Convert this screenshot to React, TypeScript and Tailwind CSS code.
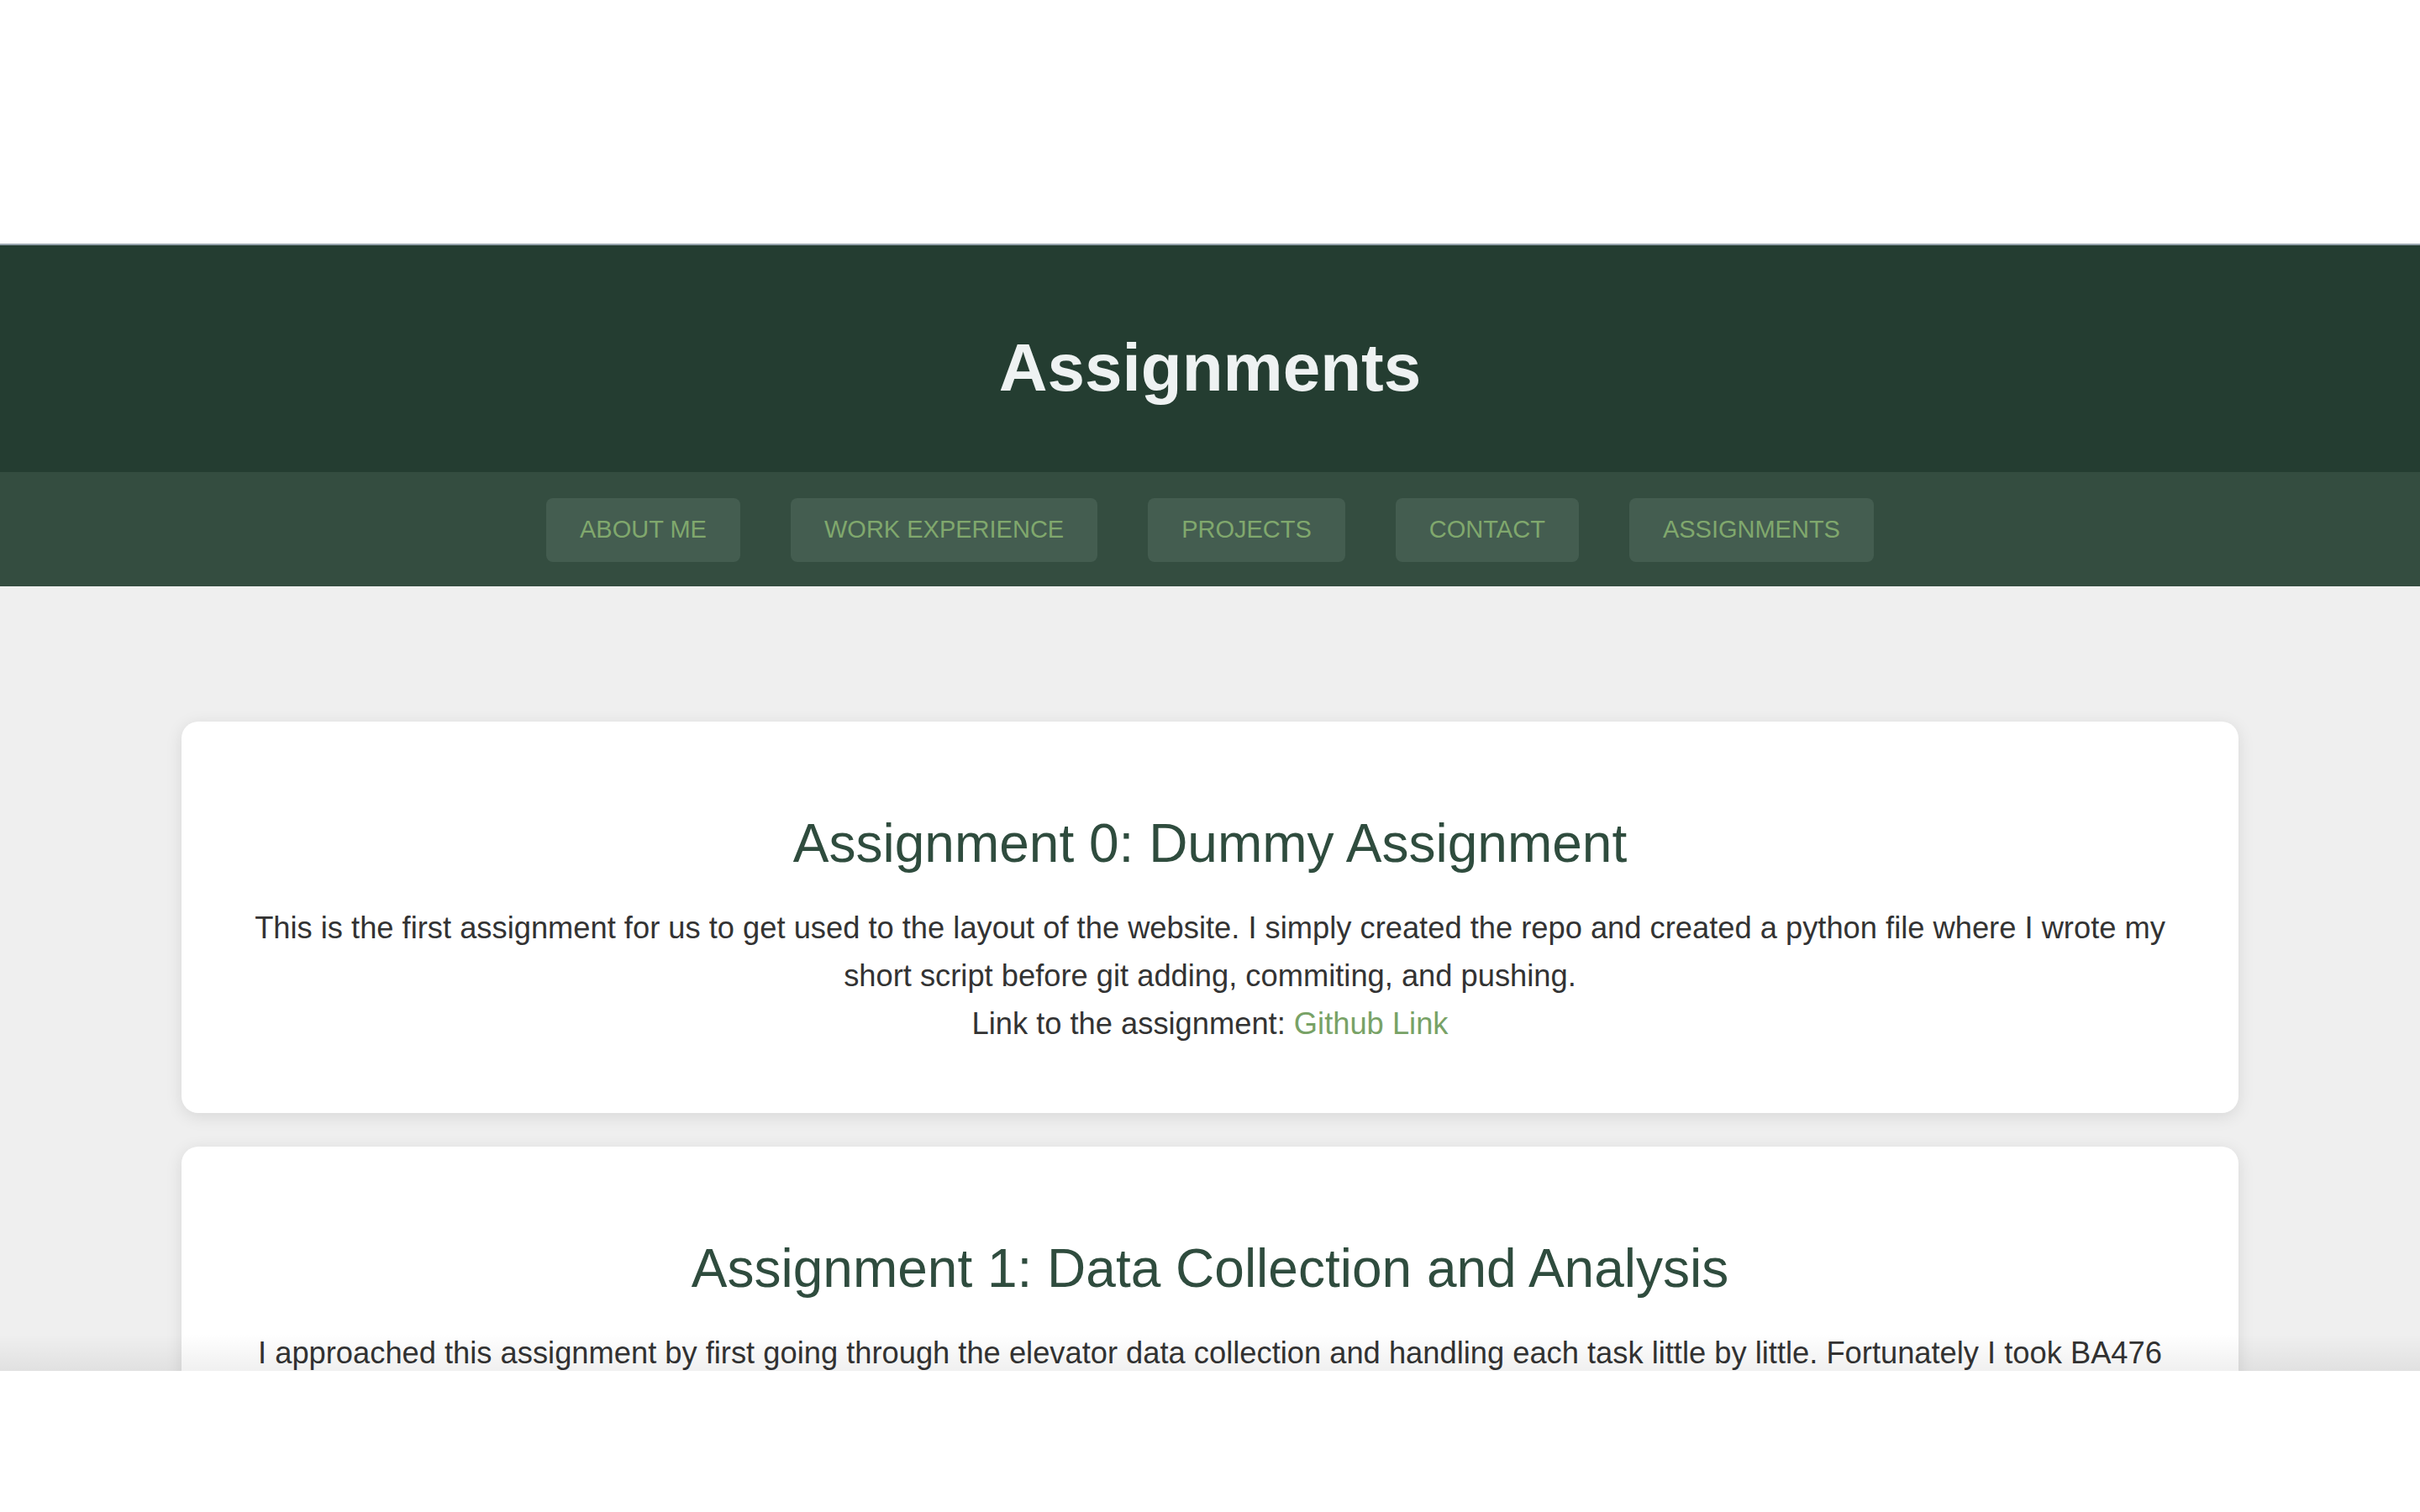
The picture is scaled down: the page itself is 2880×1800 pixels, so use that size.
const navItems = ['ABOUT ME', 'WORK EXPERIENCE', 'PROJECTS', 'CONTACT', 'ASSIGNMENTS'];

const assignments = [
  {
    title: 'Assignment 0: Dummy Assignment',
    body: 'This is the first assignment for us to get used to the layout of the website. I simply created the repo and created a python file where I wrote my short script before git adding, commiting, and pushing.',
  },
  {
    title: 'Assignment 1: Data Collection and Analysis',
    body: 'I approached this assignment by first going through the elevator data collection and handling each task little by little. Fortunately I took BA476 last semester, so most of the pandas work felt familiar and I could focus on cleaning the data and plotting the results.',
  },
];

function AssignmentCard({ title, body }: { title: string; body: string }) {
  return (
    <div className="bg-white rounded-[20px] shadow-[0_4px_20px_rgba(0,0,0,0.1)] px-[80px] pt-[108px] pb-[78px] text-center">
      <h2 className="text-[64px] leading-[74px] font-normal text-[#2f4c3e]">{title}</h2>
      <p className="mt-[35px] text-[36.3px] leading-[57px] text-[#333333]">
        {body}
        <br />
        Link to the assignment: <a href="#" className="text-[#78a266]">Github Link</a>
      </p>
    </div>
  );
}

export default function App() {
  return (
    <div className="h-screen bg-white overflow-hidden font-['Liberation_Sans',Arial,sans-serif] pt-[290px]">
      <div className="relative h-[1342px] overflow-hidden bg-[#efefef]">
        {/* header */}
        <header className="bg-[#243d31] border-t-2 border-[#97a4ad] pt-[106px] pb-[84px]">
          <h1 className="text-center text-[80px] leading-[80px] font-bold text-[#eef2f2]">Assignments</h1>
        </header>

        <nav className="bg-[#344d40] pt-[31px] pb-[29px] flex justify-center gap-[60px]">
          {navItems.map((item) => (
            <a
              key={item}
              href="#"
              className="h-[76px] px-[40px] flex items-center rounded-[8px] bg-[#445d50] text-[29px] text-[#80a86d]"
            >
              {item}
            </a>
          ))}
        </nav>

        <main className="pt-[161px] px-[216px] flex flex-col gap-[40px]">
          {assignments.map((a) => (
            <AssignmentCard key={a.title} title={a.title} body={a.body} />
          ))}
        </main>

        <div className="absolute bottom-0 left-0 right-0 h-[44px] bg-gradient-to-b from-transparent to-black/[0.06] pointer-events-none" />
      </div>
    </div>
  );
}
